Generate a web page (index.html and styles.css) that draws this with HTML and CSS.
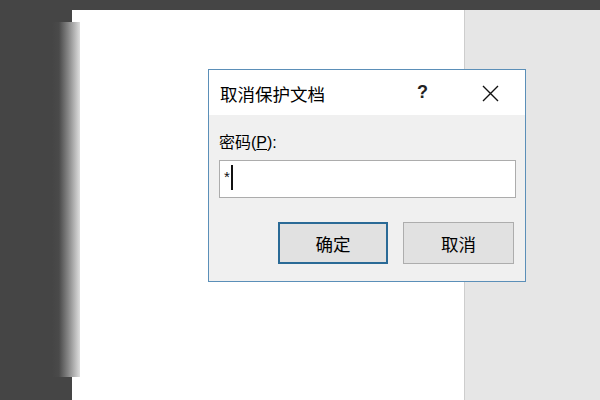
FILE: index.html
```html
<!DOCTYPE html>
<html lang="zh-CN">
<head>
    <meta charset="UTF-8">
    <title>取消保护文档</title>
    <link rel="stylesheet" href="styles.css">
</head>
<body>
    <div class="screen">
        <div class="page">
            <div class="doc"></div>
            <div class="pane"></div>
        </div>
        <div class="edge-shadow"></div>

        <div class="dialog">
            <div class="title-bar">
                <div class="title">取消保护文档</div>
                <div class="help">?</div>
                <div class="close">
                    <svg width="17" height="17" viewBox="0 0 17 17">
                        <path d="M1 1 L16 16 M16 1 L1 16" stroke="#111" stroke-width="1.4" fill="none"/>
                    </svg>
                </div>
            </div>
            <div class="dialog-body">
                <div class="label">密码(<u>P</u>):</div>
                <div class="input">
                    <span class="mask">*</span><span class="caret"></span>
                </div>
                <div class="buttons">
                    <div class="btn btn-default">确定</div>
                    <div class="btn">取消</div>
                </div>
            </div>
        </div>
    </div>
</body>
</html>
```

FILE: styles.css
```css
body {
    margin: 0;
    background-color: #454545;
    font-family: "Liberation Sans", "Noto Sans CJK SC", sans-serif;
    overflow: hidden;
}
.screen {
    position: relative;
    width: 600px;
    height: 400px;
    padding: 10px 0 0 72px;
    box-sizing: border-box;
}
.page {
    display: flex;
    height: 390px;
}
.doc {
    flex: 1;
    background-color: #fff;
}
.pane {
    width: 135px;
    background-color: #e6e6e6;
    border-left: 1px solid #cdcdcd;
}
/* sombra del panel izquierdo */
.edge-shadow {
    position: absolute;
    left: 52px;
    top: 22px;
    width: 28px;
    height: 355px;
    background: linear-gradient(to right, #454545 0%, #4a4a4a 25%, #8a8a8a 60%, #dedede 100%);
}
.dialog {
    position: absolute;
    left: 208px;
    top: 69px;
    width: 318px;
    height: 213px;
    box-sizing: border-box;
    border: 1px solid #5b8fb8;
    background-color: #f0f0f0;
    display: flex;
    flex-direction: column;
}
.title-bar {
    height: 45px;
    background-color: #fff;
    display: flex;
    align-items: center;
    padding-left: 11px;
}
.title {
    font-size: 17.5px;
    color: #000;
    flex: 1;
    padding-top: 1px;
}
.help {
    font-size: 18px;
    font-weight: bold;
    color: #222;
    width: 10px;
    margin-right: 55px;
}
.close {
    width: 17px;
    height: 17px;
    margin-right: 26px;
    margin-top: 1px;
}
.dialog-body {
    flex: 1;
    padding: 0 9px 0 10px;
}
.label {
    margin-top: 18px;
    height: 20px;
    line-height: 20px;
    font-size: 16px;
    color: #000;
}
.input {
    margin-top: 7px;
    height: 38px;
    box-sizing: border-box;
    border: 1px solid #acacac;
    background-color: #fff;
    display: flex;
    align-items: flex-start;
    padding: 5px 0 0 4px;
}
.mask {
    font-size: 15px;
    line-height: 15px;
    margin-top: 3px;
    margin-right: 1px;
    color: #111;
}
.caret {
    width: 2px;
    height: 25px;
    margin-top: -1px;
    background-color: #111;
}
.buttons {
    margin-top: 24px;
    display: flex;
    justify-content: flex-end;
    gap: 15px;
    padding-right: 2px;
}
.btn {
    width: 111px;
    height: 42px;
    box-sizing: border-box;
    border: 1px solid #adadad;
    background-color: #e1e1e1;
    display: flex;
    justify-content: center;
    align-items: center;
    font-size: 17.5px;
    color: #000;
}
.btn-default {
    width: 110px;
    border: 2px solid #2a6a96;
}
```
